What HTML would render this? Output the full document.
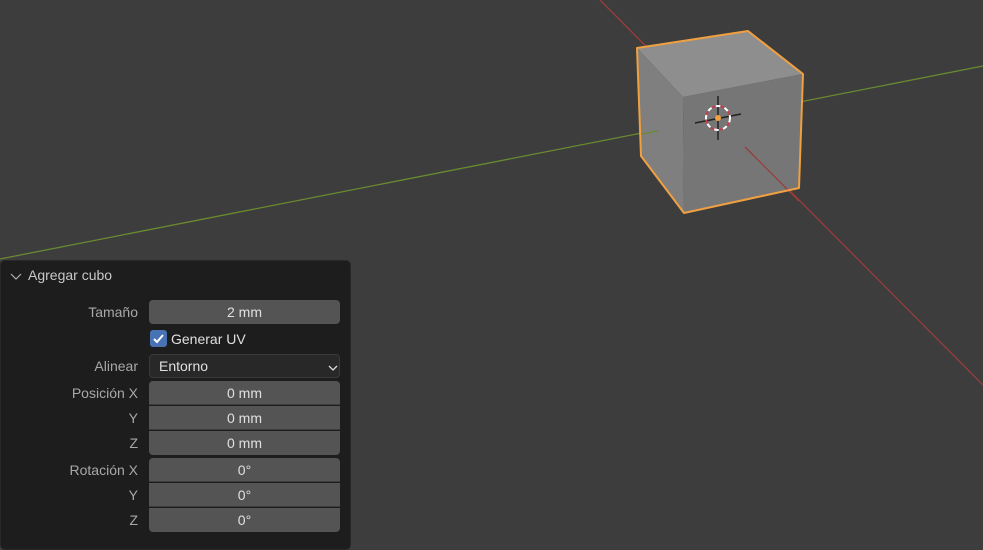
<!DOCTYPE html>
<html><head><meta charset="utf-8"><style>
html,body{margin:0;padding:0;width:983px;height:542px;overflow:hidden;background:#3d3d3d;font-family:"Liberation Sans","DejaVu Sans",sans-serif}
svg{position:absolute;left:0;top:0}
#panel{position:absolute;left:0;top:260px;width:351px;height:290px;background:#1d1d1d;border-radius:5px;border:1px solid #282828;box-sizing:border-box}
.t{position:absolute;color:#c8c8c8;font-size:14px}
.lbl{position:absolute;color:#a8a8a8;font-size:14px;text-align:right;white-space:nowrap}
.f{position:absolute;left:149px;width:191px;height:24px;background:#545454;color:#e0e0e0;font-size:14px;line-height:24px;text-align:center;box-sizing:border-box}
</style></head><body>
<svg width="983" height="542">
<line x1="0" y1="259" x2="983" y2="66" stroke="#6a8a30" stroke-width="1.3"/>
<line x1="600" y1="0" x2="983" y2="385" stroke="#9a3c3c" stroke-width="1.3"/>
<polygon points="637,48 748,31 803,74 683,97" fill="#8e8e8e"/>
<polygon points="637,48 683,97 684,213 641,156" fill="#7f7f7f"/>
<polygon points="683,97 803,74 799,188 684,213" fill="#767676"/>
<line x1="658" y1="131" x2="641" y2="134" stroke="#6a8a30" stroke-width="1.3"/>
<line x1="745" y1="147" x2="799" y2="201" stroke="#9a3c3c" stroke-width="1.3"/>
<polygon points="637,48 748,31 803,74 799,188 684,213 641,156" fill="none" stroke="#f0a040" stroke-width="2" stroke-linejoin="round"/>
<line x1="718" y1="96" x2="718" y2="140" stroke="#222" stroke-width="1.5"/>
<line x1="695" y1="123" x2="741" y2="114" stroke="#222" stroke-width="1.5"/>
<circle cx="718" cy="118" r="12" fill="none" stroke="#fff" stroke-width="2" stroke-dasharray="5 4"/>
<circle cx="718" cy="118" r="12" fill="none" stroke="#c04050" stroke-width="2" stroke-dasharray="4 5" stroke-dashoffset="4.5"/>
<circle cx="718" cy="118" r="3" fill="#f0a040"/>
</svg>
<div id="panel">
<svg width="20" height="20" style="left:7px;top:7px"><polyline points="3,6 8,11 13,6" fill="none" stroke="#b0b0b0" stroke-width="1.2"/></svg>
<div class="t" style="left:27px;top:6px">Agregar cubo</div>
</div>
<div class="lbl" style="top:304px;left:0;width:138px">Tamaño</div>
<div class="f" style="top:300px;border-radius:4px">2 mm</div>
<div style="position:absolute;left:150px;top:330px;width:17px;height:17px;background:#4772b3;border-radius:3px"><svg width="17" height="17"><polyline points="4,9 7,12 13,5" fill="none" stroke="#fff" stroke-width="2"/></svg></div>
<div class="t" style="left:171px;top:331px;color:#e0e0e0">Generar UV</div>
<div class="lbl" style="top:358px;left:0;width:138px">Alinear</div>
<div class="f" style="top:354px;border-radius:4px;background:#282828;border:1px solid #3a3a3a;text-align:left;padding-left:9px;line-height:22px">Entorno<svg width="10" height="8" style="position:absolute;left:178px;top:9px"><polyline points="1,2 5,6 9,2" fill="none" stroke="#ddd" stroke-width="1.3"/></svg></div>
<div class="lbl" style="top:385px;left:0;width:138px">Posición X</div>
<div class="lbl" style="top:410px;left:0;width:138px">Y</div>
<div class="lbl" style="top:435px;left:0;width:138px">Z</div>
<div class="f" style="top:381px;border-radius:4px 4px 0 0;border-bottom:1px solid #3d3d3d">0 mm</div>
<div class="f" style="top:406px;border-bottom:1px solid #3d3d3d">0 mm</div>
<div class="f" style="top:431px;border-radius:0 0 4px 4px">0 mm</div>
<div class="lbl" style="top:462px;left:0;width:138px">Rotación X</div>
<div class="lbl" style="top:487px;left:0;width:138px">Y</div>
<div class="lbl" style="top:512px;left:0;width:138px">Z</div>
<div class="f" style="top:458px;border-radius:4px 4px 0 0;border-bottom:1px solid #3d3d3d">0°</div>
<div class="f" style="top:483px;border-bottom:1px solid #3d3d3d">0°</div>
<div class="f" style="top:508px;border-radius:0 0 4px 4px">0°</div>
</body></html>
